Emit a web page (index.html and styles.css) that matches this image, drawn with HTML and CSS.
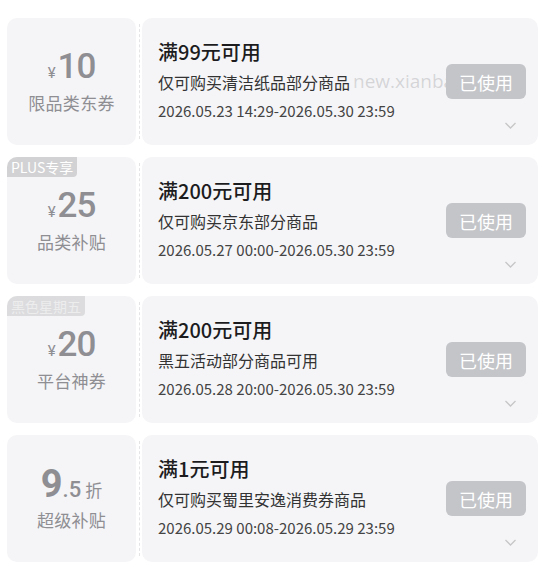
FILE: index.html
```html
<!DOCTYPE html>
<html lang="zh-CN">
<head>
    <meta charset="UTF-8">
    <meta name="viewport" content="width=device-width, initial-scale=1.0">
    <title>我的优惠券</title>
    <link rel="stylesheet" href="styles.css">
</head>
<body>
    <div class="list">

        <div class="coupon">
            <div class="face">
                <div class="amount"><span class="unit">¥</span><span class="num">10</span></div>
                <div class="kind">限品类东券</div>
            </div>
            <div class="cut"></div>
            <div class="info">
                <div class="text">
                    <div class="title">满99元可用</div>
                    <div class="desc">仅可购买清洁纸品部分商品</div>
                    <div class="date">2026.05.23 14:29-2026.05.30 23:59</div>
                </div>
                <div class="action">
                    <button class="used">已使用</button>
                    <svg class="chevron" viewBox="0 0 12 7"><path d="M1 1l5 5 5-5"/></svg>
                </div>
                <div class="watermark">new.xianbao</div>
            </div>
        </div>

        <div class="coupon">
            <div class="face">
                <span class="tag">PLUS专享</span>
                <div class="amount"><span class="unit">¥</span><span class="num">25</span></div>
                <div class="kind">品类补贴</div>
            </div>
            <div class="cut"></div>
            <div class="info">
                <div class="text">
                    <div class="title">满200元可用</div>
                    <div class="desc">仅可购买京东部分商品</div>
                    <div class="date">2026.05.27 00:00-2026.05.30 23:59</div>
                </div>
                <div class="action">
                    <button class="used">已使用</button>
                    <svg class="chevron" viewBox="0 0 12 7"><path d="M1 1l5 5 5-5"/></svg>
                </div>
            </div>
        </div>

        <div class="coupon">
            <div class="face">
                <span class="tag tag-dim">黑色星期五</span>
                <div class="amount"><span class="unit">¥</span><span class="num">20</span></div>
                <div class="kind">平台神券</div>
            </div>
            <div class="cut"></div>
            <div class="info">
                <div class="text">
                    <div class="title">满200元可用</div>
                    <div class="desc">黑五活动部分商品可用</div>
                    <div class="date">2026.05.28 20:00-2026.05.30 23:59</div>
                </div>
                <div class="action">
                    <button class="used">已使用</button>
                    <svg class="chevron" viewBox="0 0 12 7"><path d="M1 1l5 5 5-5"/></svg>
                </div>
            </div>
        </div>

        <div class="coupon">
            <div class="face">
                <div class="amount"><span class="num num-bold">9</span><span class="dec">.5</span><span class="off">折</span></div>
                <div class="kind">超级补贴</div>
            </div>
            <div class="cut"></div>
            <div class="info">
                <div class="text">
                    <div class="title">满1元可用</div>
                    <div class="desc">仅可购买蜀里安逸消费券商品</div>
                    <div class="date">2026.05.29 00:08-2026.05.29 23:59</div>
                </div>
                <div class="action">
                    <button class="used">已使用</button>
                    <svg class="chevron" viewBox="0 0 12 7"><path d="M1 1l5 5 5-5"/></svg>
                </div>
            </div>
        </div>

    </div>
</body>
</html>
```

FILE: styles.css
```css
body {
    margin: 0;
    padding: 0;
    background-color: #fff;
    font-family: "Noto Sans CJK SC", "Noto Sans", sans-serif;
}
.list {
    padding: 18px 2px 0 7px;
}
.coupon {
    display: flex;
    height: 127px;
    margin-bottom: 12px;
}
.face {
    position: relative;
    width: 129px;
    background: #f5f5f7;
    border-radius: 10px;
    display: flex;
    flex-direction: column;
    align-items: center;
    justify-content: center;
    color: #8e8e93;
    padding-bottom: 2px;
    box-sizing: border-box;
}
.tag {
    position: absolute;
    top: 0;
    left: 0;
    height: 20px;
    line-height: 20px;
    padding: 0 4px;
    font-size: 14px;
    color: #fff;
    background: #d2d2d4;
    border-radius: 10px 0 4px 0;
}
.tag-dim {
    background: #dcdcde;
    color: #ededee;
}
.amount {
    display: flex;
    align-items: baseline;
    height: 40px;
    line-height: 40px;
    font-family: Roboto, "Liberation Sans", sans-serif;
}
.unit {
    font-size: 15px;
    margin-right: 2px;
}
.num {
    font-size: 35px;
    font-weight: 500;
    letter-spacing: -1px;
}
.num-bold {
    font-size: 38px;
    font-weight: 700;
}
.dec {
    font-size: 22px;
    font-weight: 500;
    margin-left: 1px;
}
.off {
    font-size: 17px;
    margin-left: 4px;
    font-family: "Noto Sans CJK SC", sans-serif;
}
.kind {
    margin-top: 4px;
    font-size: 17px;
    line-height: 24px;
    letter-spacing: 0.3px;
}
.cut {
    width: 6px;
    display: flex;
    justify-content: center;
    padding: 6px 0;
    box-sizing: border-box;
}
.cut::before {
    content: "";
    border-left: 1px dashed #e4e4e6;
}
.info {
    position: relative;
    flex: 1;
    display: flex;
    background: #f5f5f7;
    border-radius: 10px;
    padding-left: 16px;
}
.text {
    flex: 1;
    padding-top: 21px;
}
.title {
    font-size: 20px;
    line-height: 26px;
    font-weight: 500;
    color: #1c1c1e;
}
.desc {
    margin-top: 5px;
    font-size: 16px;
    line-height: 24px;
    color: #333;
}
.date {
    margin-top: 5px;
    font-size: 15px;
    line-height: 24px;
    color: #444;
}
.action {
    display: flex;
    flex-direction: column;
    align-items: flex-end;
    padding: 46px 12px 16px 0;
    position: relative;
    z-index: 1;
}
.used {
    width: 80px;
    height: 35px;
    border: none;
    border-radius: 6px;
    background: #c4c5c9;
    color: #fff;
    font-family: inherit;
    font-size: 18px;
    padding: 0;
}
.chevron {
    margin-top: auto;
    margin-right: 9px;
    width: 13px;
    height: 7px;
    fill: none;
    stroke: #c6c6c8;
    stroke-width: 1.3;
}
.watermark {
    position: absolute;
    left: 211px;
    top: 50px;
    font-family: "Open Sans", sans-serif;
    font-size: 19px;
    line-height: 26px;
    color: rgba(150, 150, 155, 0.35);
    white-space: nowrap;
}
```
